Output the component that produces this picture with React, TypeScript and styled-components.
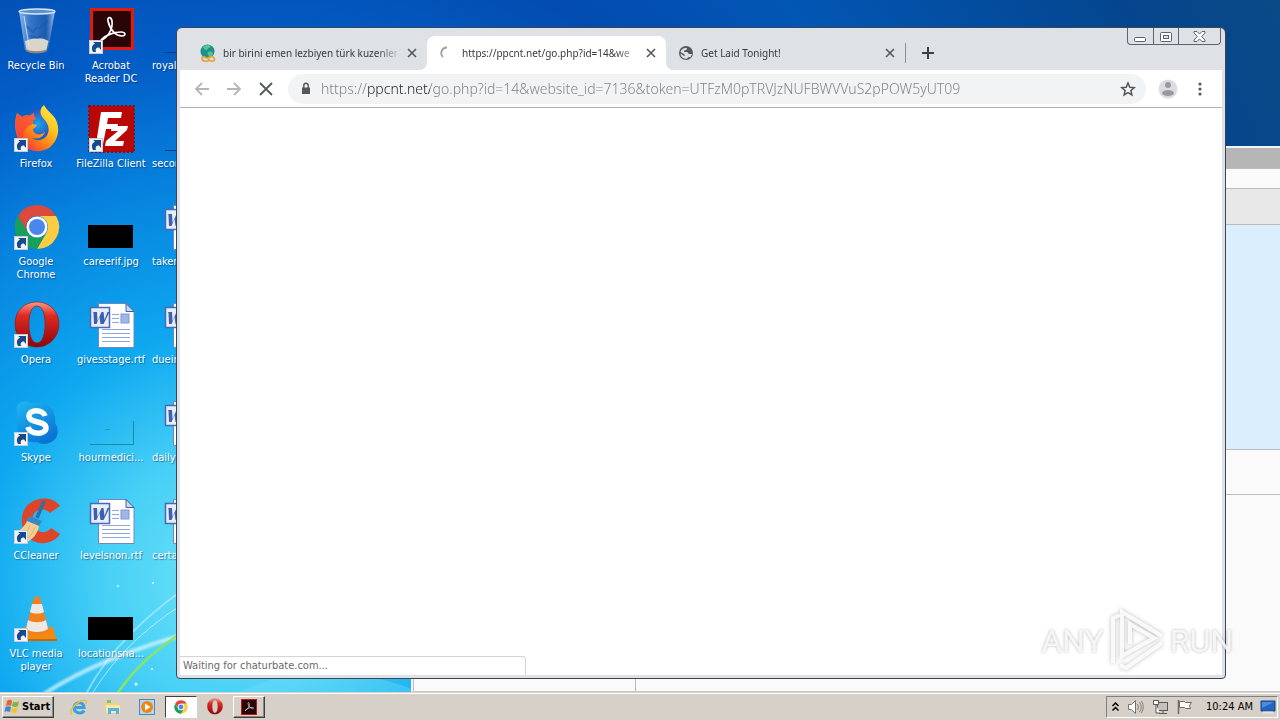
import React from 'react';
import styled, { createGlobalStyle, css } from 'styled-components';

const Global = createGlobalStyle`
  * { box-sizing: border-box; }
  body { margin: 0; overflow: hidden; }
  body, button, input { font-family: "DejaVu Sans Condensed", "DejaVu Sans", sans-serif; font-size: 11px; }
  button { border: 0; padding: 0; background: none; color: inherit; }
  svg { display: block; flex: none; }
`;

/* ---------- desktop ---------- */

const Screen = styled.div`
  display: flex;
  flex-direction: column;
  height: 100vh;
  min-height: 480px;
`;

const Workspace = styled.main`
  position: relative;
  flex: 1;
  overflow: hidden;
  background: radial-gradient(circle at 230px 580px,
    #6fe4f8 0, #46cff6 130px, #0ea8f0 250px, #0682de 400px,
    #035cc6 530px, #024cb0 660px, #0256b4 800px, #04458e 1060px, #0a4a86 1200px);
`;

const LightStreaks = styled.svg`
  position: absolute;
  left: 0;
  bottom: 0;
`;

const Shortcuts = styled.div`
  position: relative;
  display: grid;
  grid-auto-flow: column;
  grid-template-rows: repeat(7, 98px);
  grid-auto-columns: 72px;
  column-gap: 3px;
  justify-content: start;
  padding-top: 7px;
`;

const Shortcut = styled.button<{ $start?: boolean }>`
  display: flex;
  flex-direction: column;
  justify-content: flex-start;
  align-items: center;
  gap: 4px;
  color: #fff;
  line-height: 13px;
  text-shadow: 1px 1px 1px rgba(0, 30, 80, 0.5);
  white-space: nowrap;
  ${(p) => p.$start && css`
    span { align-self: flex-start; padding-left: 2px; }
  `}
`;

/* ---------- background window ---------- */

const BackWindow = styled.section`
  position: absolute;
  left: 411px;
  right: -20px;
  top: 146px;
  bottom: 0;
  display: flex;
  flex-direction: column;
  border: 2px solid #eef6f8;
  border-bottom: 1px solid #c8c8c8;
  background: #fafafa;
`;

const Band = styled.div<{ $h: number; $bg: string }>`
  height: ${(p) => p.$h}px;
  background: ${(p) => p.$bg};
  border-bottom: 1px solid #bcbcbc;
`;

const BackPanes = styled.div`
  flex: 1;
  display: flex;
  border-left: 1px solid #d8b8a8;
`;

const BackSidebar = styled.div`
  width: 222px;
  border-right: 1px solid #b8b8b8;
`;

/* ---------- browser window ---------- */

const Browser = styled.section`
  position: absolute;
  left: 176px;
  right: 54px;
  top: 27px;
  bottom: 13px;
  display: flex;
  flex-direction: column;
  padding: 0 3px 3px;
  border: 1px solid #3c4650;
  border-radius: 6px 6px 4px 4px;
  background: #dee1e6;
`;

const TabStrip = styled.div`
  display: flex;
  align-items: flex-end;
  height: 42px;
  padding-left: 8px;
`;

const Tab = styled.div<{ $active?: boolean }>`
  position: relative;
  display: flex;
  align-items: center;
  gap: 7px;
  flex: 0 1 239px;
  min-width: 0;
  height: 34px;
  padding: 0 7px 0 12px;
  border-radius: 8px 8px 0 0;
  color: #36393c;
  ${(p) => p.$active && css`
    background: #fff;
    &::before, &::after {
      content: "";
      position: absolute;
      bottom: 0;
      width: 8px;
      height: 8px;
    }
    &::before { left: -8px; background: radial-gradient(circle at 0 0, transparent 8px, #fff 8px); }
    &::after { right: -8px; background: radial-gradient(circle at 100% 0, transparent 8px, #fff 8px); }
  `}
`;

const TabTitle = styled.span`
  flex: 1;
  overflow: hidden;
  font-family: "Noto Sans", sans-serif;
  font-size: 10px;
  line-height: 16px;
  white-space: nowrap;
  mask-image: linear-gradient(90deg, #000 calc(100% - 20px), rgba(0, 0, 0, 0.2));
`;

const NewTab = styled.button`
  display: flex;
  align-items: center;
  height: 20px;
  margin-bottom: 7px;
  padding-left: 14px;
  border-left: 1px solid #8c9096;
`;

const Controls = styled.div`
  align-self: flex-start;
  display: flex;
  height: 17px;
  margin: 0 1px 0 auto;
  border: 1px solid #5c6470;
  border-top: 0;
  border-radius: 0 0 4px 4px;
`;

const Control = styled.button<{ $wide?: boolean }>`
  display: flex;
  align-items: center;
  justify-content: center;
  width: ${(p) => (p.$wide ? 42 : 25)}px;
  & + & { border-left: 1px solid #5c6470; }
`;

const Toolbar = styled.div`
  display: flex;
  align-items: center;
  height: 38px;
  padding: 0 12px;
  border-bottom: 1px solid #b4b4b6;
  background: #fff;
`;

const ToolButton = styled.button`
  display: flex;
  align-items: center;
  justify-content: center;
  width: 20px;
  height: 20px;
  margin-right: 12px;
  &:last-child { margin-right: 0; }
`;

const Omnibox = styled.label`
  flex: 1;
  display: flex;
  align-items: center;
  gap: 8px;
  height: 30px;
  margin-right: 12px;
  padding: 0 8px 0 12px;
  border-radius: 15px;
  background: #f1f3f4;
`;

const Address = styled.input`
  flex: 1;
  min-width: 0;
  border: 0;
  padding: 0;
  outline: 0;
  font-family: "Noto Sans", sans-serif;
  font-weight: 300;
  font-size: 14px;
  line-height: 20px;
  color: transparent;
  background: linear-gradient(90deg, #7c8084 47px, #202124 47px, #202124 109px, #7c8084 109px);
  background-clip: text;
`;

const Page = styled.div`
  flex: 1;
  display: flex;
  align-items: flex-end;
  background: #fff;
`;

const Status = styled.div`
  width: 346px;
  height: 19px;
  padding-left: 3px;
  border: 1px solid #d4d4d4;
  border-width: 1px 1px 0 0;
  border-radius: 0 4px 0 0;
  color: #6a6a6a;
  line-height: 18px;
`;

/* ---------- watermark ---------- */

const Watermark = styled.div`
  position: absolute;
  right: 47px;
  bottom: 19px;
  display: flex;
  align-items: center;
  gap: 4px;
  color: rgba(255, 255, 255, 0.85);
  font: 32px/64px Roboto, "Liberation Sans", sans-serif;
  text-shadow: 0 0 3px rgba(0, 0, 0, 0.3);
  svg { filter: drop-shadow(0 0 2px rgba(0, 0, 0, 0.3)); }
`;

/* ---------- taskbar ---------- */

const Taskbar = styled.footer`
  display: flex;
  align-items: center;
  height: 28px;
  padding: 0 2px;
  border-top: 1px solid #d6d0c8;
  box-shadow: inset 0 1px #fff;
  background: #d6d0c8;
`;

const raised = css`
  border: 1px solid #fff;
  border-color: #fff #404040 #404040 #fff;
  box-shadow: inset -1px -1px #8a8680;
`;

const StartButton = styled.button`
  ${raised}
  display: flex;
  align-items: center;
  gap: 1px;
  width: 52px;
  height: 22px;
  margin-right: 9px;
  padding-left: 1px;
  font-weight: bold;
  color: #000;
`;

const TaskButton = styled.button<{ $state?: 'pressed' | 'raised' }>`
  display: flex;
  align-items: center;
  justify-content: center;
  width: 32px;
  height: 22px;
  margin-right: 2px;
  ${(p) => p.$state === 'raised' && raised}
  ${(p) => p.$state === 'pressed' && css`
    border: 1px solid #fff;
    border-color: #404040 #fff #fff #404040;
    background: #fdfdfc;
  `}
`;

const Tray = styled.div`
  display: flex;
  align-items: center;
  gap: 7px;
  height: 22px;
  margin-left: auto;
  padding: 0 1px 0 4px;
  border: 1px solid #fff;
  border-color: #808080 #fff #fff #808080;
  color: #000;
`;

const Clock = styled.time`
  padding-left: 6px;
`;

/* ---------- icons ---------- */

const Link = () => (
  <g>
    <rect x="2.5" y="33.5" width="13" height="13" fill="#f2f5f8" stroke="#c9cdd2" />
    <path d="M6 45c-2-4-1-7 2-8.500L6 35h8v8l-2-2.500c-3 0-4 2-3 4.500z" fill="#174a8c" />
  </g>
);

const Icon48 = ({ children }: { children?: React.ReactNode }) => (
  <svg width="48" height="48" viewBox="0 0 48 48" aria-hidden="true">{children}</svg>
);

const BinIcon = () => (
  <Icon48>
    <defs>
      <linearGradient id="bin" x2="1">
        <stop offset="0" stopColor="#a9c8ee" stopOpacity=".85" /><stop offset=".3" stopColor="#4c86cc" stopOpacity=".7" />
        <stop offset=".75" stopColor="#2d62ae" stopOpacity=".6" /><stop offset="1" stopColor="#b7d2f0" stopOpacity=".9" />
      </linearGradient>
    </defs>
    <path d="M7 4l6 39c3 3 20 3 23 0l7-39z" fill="url(#bin)" />
    <path d="M13 34l1.500 9c3 3 17 3 20 0l2-9c-7-4-16-3-23 0z" fill="#d9d5cd" />
    <path d="M14 42c4 3 17 3 21 0l-.5 2.500c-4 2.500-16 2.500-20 0z" fill="#8b8478" />
    <path d="M14 19l7 6 4-5M27 22l9-8M18 29l8 2 6-5" stroke="#2357a4" strokeWidth="2" fill="none" opacity=".6" />
    <ellipse cx="25" cy="4.500" rx="18" ry="2.500" fill="#5d8fcc" stroke="#d8e7f5" strokeWidth="1.300" />
    <path d="M12 9l5 30" stroke="#e4f0fc" opacity=".8" />
  </Icon48>
);

const PdfSwirl = () => (
  <path d="M13 34c8-3 13-12 12-20-1-5-5-4-4 0 2 9 8 15 14 15 4 0 4-4-1-4-8 0-16 4-19 7-2 2-2 3 0 2z"
    fill="none" stroke="#fff" strokeWidth="1.700" />
);

const AcrobatIcon = () => (
  <Icon48>
    <rect x="3" y="1" width="44" height="42" fill="#e31a12" />
    <rect x="6" y="4" width="38" height="36" fill="#2a0508" />
    <PdfSwirl />
    <Link />
  </Icon48>
);

const FirefoxIcon = () => (
  <Icon48>
    <defs>
      <linearGradient id="fox" x1=".9" y1="0" x2=".1" y2="1">
        <stop offset="0" stopColor="#fff14a" /><stop offset=".35" stopColor="#ffc421" />
        <stop offset=".65" stopColor="#ff7a18" /><stop offset="1" stopColor="#ee1f4c" />
      </linearGradient>
      <radialGradient id="globe"><stop offset="0" stopColor="#1da4ee" /><stop offset="1" stopColor="#2b4fb8" /></radialGradient>
    </defs>
    <circle cx="26" cy="19" r="15" fill="url(#globe)" />
    <path d="M5 8l5 4c3-2 6-2 8-1l4-3c0 3 0 5 2 6-4 1-4 3-3 5l4 1c-1 3-4 3-4 5 1 5 8 6 12 2-2 7-11 8-14 5 5 6 15 3 17-4 2-6-1-11-5-15C27 8 28 3 32 0c2 5 9 9 12 15 5 11 1 22-7 28-8 5-20 4-27-3C2 31 2 17 5 8z" fill="url(#fox)" />
    <path d="M5 8l5 4c3-2 6-2 8-1l4-3c0 3 0 5 2 6-4 1-4 3-3 5-8 3-13 10-8 20C3 32 2 17 5 8z" fill="#f7433c" opacity=".75" />
    <Link />
  </Icon48>
);

const FileZillaIcon = () => (
  <Icon48>
    <rect x="2" y="1" width="45" height="46" fill="#b90806" stroke="#96080a" strokeWidth="2" strokeDasharray="2 2" />
    <path d="M14 7h21l-1 6H21l-1 6h11l-1 5H19l-3 15h-7z" fill="#fff" />
    <path d="M25 21h16l-1 4-12 11h9l-1 5H18l1-5 12-10h-7z" fill="#fff" />
    <Link />
  </Icon48>
);

const ChromeDisc = () => (
  <g>
    <path d="M4.900 13A22 22 0 0 1 43.100 13H24A11 11 0 0 0 14.500 29.500z" fill="#dc4a3d" />
    <path d="M43.100 13A22 22 0 0 1 24 46l9.500-16.500A11 11 0 0 0 24 13z" fill="#fccd40" />
    <path d="M24 46A22 22 0 0 1 4.900 13l9.600 16.500a11 11 0 0 0 19 0z" fill="#179f5c" />
    <circle cx="24" cy="24" r="10.500" fill="#fff" />
    <circle cx="24" cy="24" r="8" fill="#4a86ee" />
  </g>
);

const ChromeIcon = () => (
  <Icon48><g transform="translate(1 0)"><ChromeDisc /></g><Link /></Icon48>
);

const OperaRing = () => (
  <g>
    <defs>
      <linearGradient id="opera" x2="0" y2="1">
        <stop offset="0" stopColor="#ff9a84" /><stop offset=".3" stopColor="#e02a22" /><stop offset="1" stopColor="#8f0508" />
      </linearGradient>
    </defs>
    <path fillRule="evenodd" fill="url(#opera)" stroke="#8c1512" strokeWidth=".6"
      d="M25 1c13 0 22 10 22 22S38 46 25 46 3 36 3 23 12 1 25 1zM25 5c-6 0-8 9-8 18s2 19 8 19 8-10 8-19-2-18-8-18z" />
  </g>
);

const OperaIcon = () => <Icon48><OperaRing /><Link /></Icon48>;

const WordIcon = () => (
  <Icon48>
    <path d="M11.500 2.500H39l8 8v36H11.500z" fill="#fff" stroke="#6c87c4" />
    <path d="M39 2.500v8h8z" fill="#c9d8f4" stroke="#43609f" />
    <path d="M25 13.500h7M25 17.500h7M25 21.500h7M15 28.500h28M15 32.500h28M15 36.500h28M15 40.500h28" stroke="#8fa8da" />
    <rect x="34" y="13" width="8" height="9" fill="#9fb6e6" stroke="#7c98d4" />
    <rect x="3.500" y="6.500" width="19" height="20" fill="#e6edfb" stroke="#4a69b4" strokeWidth="1.500" />
    <path d="M6 11h4l.5 9 4-9h2l1 8 3-8h2l-6 12h-3l-1-7-3 7H7L6.500 12z" fill="#3c5fb0" />
  </Icon48>
);

const SkypeIcon = () => (
  <Icon48>
    <defs>
      <linearGradient id="skype" x2=".6" y2="1"><stop offset="0" stopColor="#1fb8f4" /><stop offset="1" stopColor="#0a74d4" /></linearGradient>
    </defs>
    <path d="M5 14C2 5 11-1 20 4c14-3 25 7 23 20 6 9 2 20-10 21-4 0-6-1-8-2C12 45 3 35 5 23c-1-3-1-6 0-9z" fill="url(#skype)" />
    <path d="M33 17c-2-7-16-7-16 0 0 8 17 4 17 12 0 7-16 7-18-1" fill="none" stroke="#fff" strokeWidth="5.500" />
    <Link />
  </Icon48>
);

const CCleanerIcon = () => (
  <Icon48>
    <path d="M48 9C42 0 28-1 18 6 6 15 8 34 18 42c9 7 24 5 30-5l-9-6c-4 6-13 5-16 0-4-6-3-12 0-16 5-4 12-3 15 1z" fill="#dd4428" />
    <path d="M32 4l-7 17" stroke="#2c70ac" strokeWidth="3.500" />
    <path d="M17 19l13 5-3 5-13-5z" fill="#3b87c0" />
    <path d="M15 24l12 5c-1 8-7 14-14 17-5-2-8-5-11-11 6-1 10-5 13-11z" fill="#f4cf94" />
    <path d="M18 28c-2 6-5 10-9 13M23 30c-2 6-5 10-9 13" stroke="#dcb070" fill="none" />
    <Link />
  </Icon48>
);

const VlcIcon = () => (
  <Icon48>
    <path d="M12 32h29l4 14H8z" fill="#f08a14" />
    <path d="M10 44h35v2H8z" fill="#c86608" />
    <path d="M22 3c1-2 5-2 6 0l9 34c-4 4-20 4-24 0z" fill="#f4801a" />
    <path d="M20 9h10l2 8c-3 2-11 2-14 0zM16 25c5 3 13 3 18 0l2 9c-5 4-17 4-22 0z" fill="#ece8e6" />
    <Link />
  </Icon48>
);

const ThumbIcon = () => (
  <Icon48><rect x="1" y="22" width="45" height="23" /></Icon48>
);

const FaintThumbIcon = () => (
  <Icon48>
    <path d="M3 45.500h43.500V22" fill="none" stroke="#1c88a4" />
    <path d="M18 30.500h5" stroke="#2a9ab8" />
  </Icon48>
);

const EdgeThumbIcon = () => (
  <Icon48><path d="M3 45.500h44" stroke="#123c74" /></Icon48>
);

const CloseGlyph = () => (
  <svg width="16" height="16" viewBox="0 0 16 16"><path d="M4 4l8 8M12 4l-8 8" stroke="#54585d" strokeWidth="1.600" /></svg>
);

const SmallGlobe = () => (
  <svg width="16" height="18" viewBox="0 0 16 18">
    <circle cx="7.500" cy="7.500" r="7" fill="#1f8f8c" />
    <path d="M3 3c3-3 7-2 8-1-1 2-3 2-4 4-2 0-4-1-4-3zM8 8c3-1 5 0 5 2s-3 3-4 2-2-3-1-4z" fill="#54c48c" />
    <path d="M2 14c2-3 4 1 6 0s4-3 6 0-2 4-5 2c-2 2-7 2-7-2z" fill="none" stroke="#e9a23c" strokeWidth="1.800" />
  </svg>
);

const Spinner = () => (
  <svg width="16" height="16" viewBox="0 0 16 16"><path d="M8 2.500A5.500 5.500 0 0 0 4 12" fill="none" stroke="#a0a2a6" strokeWidth="1.800" /></svg>
);

const SiteGlobe = () => (
  <svg width="16" height="16" viewBox="0 0 16 16">
    <circle cx="8" cy="8" r="7" fill="#54595e" />
    <path d="M9 3c0 2-1 2-3 2.500V7h3c1 0 1 2 2.500 2H14c-.5 1.500-1 2.500-2 3.500-1-1-2 0-3 1.300C5 14 2.500 11.500 2.500 8.500L6 11c1 0 1-1 0-2L2.500 7C3 4.500 5.500 2.500 9 3z" fill="#dee1e6" />
  </svg>
);

const WinFlag = () => (
  <svg width="17" height="17" viewBox="0 0 17 17">
    <path d="M3 3c2-2 4-1 5 0L7 8C5 7 4 7 2 8z" fill="#e8602c" />
    <path d="M9 3.500c2 1 4 1 6-.5l-1 5c-2 1.500-4 1-6 0z" fill="#7cb83c" />
    <path d="M1.500 9c2-1 4-1 5.500 0l-1 5c-2-1-4-1-5.500 0z" fill="#3c88d8" />
    <path d="M8 9.500c2 1 4 1 6-.5l-1 5c-2 1.500-4 1-6 0z" fill="#f4c430" />
  </svg>
);

const IeIcon = () => (
  <svg width="20" height="18" viewBox="0 0 20 18">
    <path d="M15 12.500c-2 4-10 3-10-3S15 3 15 9.500H6" fill="none" stroke="#38a0e4" strokeWidth="3" />
    <path d="M3 16c-4 0 1-9 7-12 5-3 9-2 7 2" fill="none" stroke="#e9bd3c" strokeWidth="1.500" />
  </svg>
);

const FolderIcon = () => (
  <svg width="18" height="16" viewBox="0 0 18 16">
    <path d="M1 2h6l1 2h8v10H1z" fill="#ecd27c" /><path d="M3 1h4v3H3z" fill="#7cc07c" />
    <path d="M2 6h14v8H2z" fill="#f8e8a4" /><path d="M4 15v-6h11v6h-3v-3H7v3z" fill="#58b0e4" />
  </svg>
);

const PlayerIcon = () => (
  <svg width="16" height="16" viewBox="0 0 16 16">
    <rect x=".5" y=".5" width="15" height="15" fill="#b4d8f0" stroke="#4a88b8" />
    <circle cx="8" cy="8" r="6" fill="#f08414" /><path d="M6 4.500l5.500 3.500L6 11.500z" fill="#fff" />
  </svg>
);

const programs = [
  { name: 'Recycle Bin', icon: <BinIcon /> },
  { name: 'Firefox', icon: <FirefoxIcon /> },
  { name: <>Google<br />Chrome</>, icon: <ChromeIcon /> },
  { name: 'Opera', icon: <OperaIcon /> },
  { name: 'Skype', icon: <SkypeIcon /> },
  { name: 'CCleaner', icon: <CCleanerIcon /> },
  { name: <>VLC media<br />player</>, icon: <VlcIcon /> },
  { name: <>Acrobat<br />Reader DC</>, icon: <AcrobatIcon /> },
  { name: 'FileZilla Client', icon: <FileZillaIcon /> },
  { name: 'careerif.jpg', icon: <ThumbIcon /> },
  { name: 'givesstage.rtf', icon: <WordIcon /> },
  { name: 'hourmedici...', icon: <FaintThumbIcon /> },
  { name: 'levelsnon.rtf', icon: <WordIcon /> },
  { name: 'locationsna...', icon: <ThumbIcon /> },
];

const coveredFiles = [
  { name: 'royal', icon: <EdgeThumbIcon /> },
  { name: 'secon', icon: <EdgeThumbIcon /> },
  { name: 'taken', icon: <WordIcon /> },
  { name: 'duein', icon: <WordIcon /> },
  { name: 'dailyr', icon: <WordIcon /> },
  { name: 'certa', icon: <WordIcon /> },
];

const tabs = [
  { title: 'bir birini emen lezbiyen türk kuzenler', icon: <SmallGlobe /> },
  { title: 'https://ppcnt.net/go.php?id=14&we', icon: <Spinner />, active: true },
  { title: 'Get Laid Tonight!', icon: <SiteGlobe /> },
];

export default function App() {
  return (
    <Screen>
      <Global />
      <Workspace>
        <LightStreaks width="420" height="190" viewBox="0 0 420 190" aria-hidden="true">
          <defs>
            <filter id="soft"><feGaussianBlur stdDeviation="1.200" /></filter>
          </defs>
          <g fill="none" stroke="#d8f6ff">
            <path d="M44 192Q100 155 200 128" strokeWidth="4" opacity=".75" filter="url(#soft)" />
            <path d="M86 192Q118 130 200 76" strokeWidth="2" opacity=".5" />
            <path d="M92 192Q128 132 200 92" strokeWidth="1" opacity=".7" />
            <path d="M117 192Q145 150 200 120" stroke="#8fe45c" strokeWidth="2.500" />
          </g>
          <path d="M240 190Q320 150 420 190z" fill="#7fe0fa" opacity=".3" />
          <g fill="#e8fbff"><circle cx="118" cy="84" r="1" /><circle cx="153" cy="81" r="1" /><circle cx="136" cy="182" r="1.500" /><circle cx="152" cy="167" r="1" /></g>
        </LightStreaks>

        <Shortcuts>
          {programs.map((s, i) => (
            <Shortcut key={i}>{s.icon}<span>{s.name}</span></Shortcut>
          ))}
          {coveredFiles.map((s) => (
            <Shortcut key={s.name} $start>{s.icon}<span>{s.name}</span></Shortcut>
          ))}
        </Shortcuts>

        <BackWindow>
          <Band $h={21} $bg="#b6b6b6" />
          <Band $h={20} $bg="#fafafa" />
          <Band $h={36} $bg="#e8e8e8" />
          <Band $h={225} $bg="#dbeefe" />
          <Band $h={45} $bg="#fafafa" />
          <BackPanes><BackSidebar /></BackPanes>
        </BackWindow>

        <Browser>
          <TabStrip>
            {tabs.map((t) => (
              <Tab key={t.title} $active={t.active}>
                {t.icon}
                <TabTitle>{t.title}</TabTitle>
                <button aria-label="Close tab"><CloseGlyph /></button>
              </Tab>
            ))}
            <NewTab aria-label="New tab">
              <svg width="16" height="16" viewBox="0 0 16 16"><path d="M8 2v12M2 8h12" stroke="#3c4043" strokeWidth="2" /></svg>
            </NewTab>
            <Controls>
              <Control aria-label="Minimize">
                <svg width="13" height="13" viewBox="0 0 13 13"><rect x=".5" y="7.500" width="11" height="4" rx="1" fill="#fff" stroke="#5c6470" /></svg>
              </Control>
              <Control aria-label="Restore">
                <svg width="12" height="11" viewBox="0 0 12 11"><rect x=".5" y="1.500" width="11" height="9" rx="1" fill="#fff" stroke="#5c6470" /><rect x="3.500" y="4.500" width="5" height="3" fill="#dee1e6" stroke="#5c6470" /></svg>
              </Control>
              <Control $wide aria-label="Close">
                <svg width="13" height="11" viewBox="0 0 13 11"><path d="M1 .5h3l2.500 2.500L9 .5h3v1.500L8.500 5.500 12 9v1.500H9L6.500 8 4 10.500H1V9l3.500-3.500L1 2z" fill="#fff" stroke="#5c6470" /></svg>
              </Control>
            </Controls>
          </TabStrip>

          <Toolbar>
            <ToolButton aria-label="Back">
              <svg width="16" height="16" viewBox="0 0 16 16"><path d="M15 8H2M8 2L2 8l6 6" fill="none" stroke="#b4b6ba" strokeWidth="1.800" /></svg>
            </ToolButton>
            <ToolButton aria-label="Forward">
              <svg width="16" height="16" viewBox="0 0 16 16"><path d="M1 8h13M8 2l6 6-6 6" fill="none" stroke="#b4b6ba" strokeWidth="1.800" /></svg>
            </ToolButton>
            <ToolButton aria-label="Stop">
              <svg width="16" height="16" viewBox="0 0 16 16"><path d="M2 2l12 12M14 2L2 14" stroke="#54585d" strokeWidth="1.800" /></svg>
            </ToolButton>
            <Omnibox>
              <svg width="13" height="14" viewBox="0 0 13 14"><path d="M2 5.500h8V12H2z" fill="#54585d" /><path d="M3.800 6V3.500a2.200 2.200 0 0 1 4.400 0V6" fill="none" stroke="#54585d" strokeWidth="1.400" /></svg>
              <Address aria-label="Address" spellCheck={false} defaultValue="https://ppcnt.net/go.php?id=14&website_id=7136&token=UTFzM0pTRVJzNUFBWVVuS2pPOW5yUT09" />
              <ToolButton aria-label="Bookmark">
                <svg width="16" height="16" viewBox="0 0 16 16"><path d="M8 2l1.800 4.200 4.500.4-3.400 3 1 4.400L8 11.700 4.100 14l1-4.400-3.400-3 4.500-.4z" fill="none" stroke="#54585d" strokeWidth="1.500" /></svg>
              </ToolButton>
            </Omnibox>
            <ToolButton aria-label="Profile">
              <svg width="20" height="20" viewBox="0 0 20 20"><circle cx="10" cy="10" r="9.500" fill="#dcdcde" /><circle cx="10" cy="6" r="3" fill="#98999c" /><ellipse cx="10" cy="14" rx="6" ry="3" fill="#98999c" /></svg>
            </ToolButton>
            <ToolButton aria-label="Menu">
              <svg width="16" height="16" viewBox="0 0 16 16" fill="#54585d"><circle cx="8" cy="3" r="1.600" /><circle cx="8" cy="8" r="1.600" /><circle cx="8" cy="13" r="1.600" /></svg>
            </ToolButton>
          </Toolbar>

          <Page><Status>Waiting for chaturbate.com...</Status></Page>
        </Browser>

        <Watermark>
          <span>ANY</span>
          <svg width="58" height="64" viewBox="0 0 58 64" fill="none" stroke="rgba(255,255,255,.85)" strokeWidth="4">
            <path d="M5 8v46M12 6l-7 3" /><path d="M54 27L14 3v44l32-18-24-14v20" /><path d="M54 34L18 59l-6-3" />
          </svg>
          <span>RUN</span>
        </Watermark>
      </Workspace>

      <Taskbar>
        <StartButton><WinFlag />Start</StartButton>
        <TaskButton aria-label="Internet Explorer"><IeIcon /></TaskButton>
        <TaskButton aria-label="Explorer"><FolderIcon /></TaskButton>
        <TaskButton aria-label="Media Player"><PlayerIcon /></TaskButton>
        <TaskButton aria-label="Chrome" $state="pressed"><svg width="14" height="14" viewBox="1 1 46 46"><ChromeDisc /></svg></TaskButton>
        <TaskButton aria-label="Opera"><svg width="16" height="17" viewBox="2 0 46 47"><OperaRing /></svg></TaskButton>
        <TaskButton aria-label="Acrobat Reader" $state="raised">
          <svg width="16" height="16" viewBox="0 0 48 48"><rect x="1" y="1" width="46" height="46" fill="#2a0508" stroke="#c01818" strokeWidth="4" /><PdfSwirl /></svg>
        </TaskButton>
        <Tray>
          <svg width="9" height="12" viewBox="0 0 9 12"><path d="M1.500 5l3-3 3 3M1.500 9.500l3-3 3 3" fill="none" stroke="#000" strokeWidth="1.500" /></svg>
          <svg width="18" height="16" viewBox="0 0 18 16"><path d="M1.500 5.500h3l4-4v13l-4-4h-3z" fill="#fff" stroke="#77736e" /><path d="M10.500 5q2 3 0 6M12.500 3q3.500 5 0 10M14.500 2q3.500 6 0 12" fill="none" stroke="#84807a" /></svg>
          <svg width="17" height="16" viewBox="0 0 17 16"><rect x="5.500" y="3.500" width="10" height="8" fill="#c4c2be" stroke="#5c5854" /><path d="M7 14.500h8M11 12v2" stroke="#5c5854" /><path d="M1.500 1.500h5v4h-5zM4 6v8h4" fill="#fff" stroke="#5c5854" /></svg>
          <svg width="17" height="16" viewBox="0 0 17 16"><path d="M2.500 1v14" stroke="#6c6862" strokeWidth="1.500" /><path d="M3.500 2.500h5l1 1h6l-2 3 1 3h-5l-1-1h-5z" fill="#fff" stroke="#6c6862" /></svg>
          <Clock>10:24 AM</Clock>
          <svg width="16" height="14" viewBox="0 0 16 14"><path d="M1 1h14v10H1z" fill="#2464c0" stroke="#14468c" /><path d="M2 2h12L2 8z" fill="#4c8cdc" /><path d="M3 12.500h10" stroke="#e4e4e4" strokeWidth="2" /></svg>
        </Tray>
      </Taskbar>
    </Screen>
  );
}
